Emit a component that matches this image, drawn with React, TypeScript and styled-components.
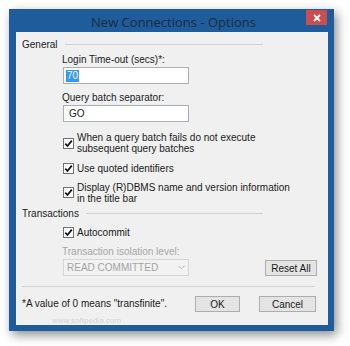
import React from "react";
import styled, { createGlobalStyle } from "styled-components";

const GlobalStyle = createGlobalStyle`
  html, body {
    margin: 0;
    padding: 0;
    background: #ffffff;
  }
  body {
    font-family: "Liberation Sans", Arial, sans-serif;
    font-size: 10px;
    color: #1a1a1a;
  }
`;

const Page = styled.div`
  width: 350px;
  height: 346px;
  padding: 9px 0 0 9px;
  box-sizing: border-box;
`;

const Window = styled.div`
  width: 325px;
  height: 322px;
  background: #1f5c9c;
  display: flex;
  flex-direction: column;
  box-shadow: 3px 4px 10px rgba(0, 0, 0, 0.45);
`;

const TitleBar = styled.div`
  height: 23px;
  position: relative;
  display: flex;
  align-items: center;
  justify-content: center;
`;

const Title = styled.div`
  font-family: "Open Sans", "Liberation Sans", sans-serif;
  font-size: 13px;
  color: #1d2b3c;
  margin-top: 2px;
  margin-left: 4px;
`;

const CloseButton = styled.div`
  position: absolute;
  top: 1px;
  right: 7px;
  width: 21px;
  height: 15px;
  background: #c74f4f;
  display: flex;
  align-items: center;
  justify-content: center;
`;

const Client = styled.div`
  flex: 1;
  margin: 0 6px 6px 7px;
  background: #f0f0f0;
  display: flex;
  flex-direction: column;
  padding: 6px 0 0 6px;
  box-sizing: border-box;
  position: relative;
`;

const GroupHeader = styled.div<{ $top?: number }>`
  width: 241px;
  height: 13px;
  display: flex;
  align-items: center;
  margin-top: ${(p) => p.$top ?? 0}px;
`;

const GroupTitle = styled.div`
  line-height: 13px;
`;

const GroupRule = styled.div`
  flex: 1;
  height: 1px;
  background: #d0d0d0;
  margin-left: 7px;
`;

const Section = styled.div`
  padding-left: 40px;
  display: flex;
  flex-direction: column;
`;

const FieldLabel = styled.div<{ $top: number; $disabled?: boolean }>`
  line-height: 12px;
  margin-top: ${(p) => p.$top}px;
  margin-bottom: 1px;
  color: ${(p) => (p.$disabled ? "#a6a6a6" : "#1a1a1a")};
`;

const TextBox = styled.div`
  width: 126px;
  height: 17px;
  box-sizing: border-box;
  border: 1px solid #a9b0bb;
  background: #ffffff;
  display: flex;
  align-items: center;
  padding-left: 2px;
  margin-left: 1px;
`;

const Selected = styled.span`
  background: #3399ff;
  color: #ffffff;
  line-height: 12px;
  padding: 0 1px;
`;

const BoxText = styled.span`
  padding-left: 3px;
`;

const CheckRow = styled.div<{ $top: number }>`
  display: flex;
  align-items: flex-start;
  margin-top: ${(p) => p.$top}px;
`;

const Box = styled.div<{ $offset?: number }>`
  width: 11px;
  height: 11px;
  box-sizing: border-box;
  border: 1px solid #707070;
  background: #ffffff;
  margin: ${(p) => p.$offset ?? 0}px 3px 0 1px;
  flex-shrink: 0;
  display: flex;
  align-items: center;
  justify-content: center;
`;

const CheckText = styled.div`
  line-height: 11px;
`;

const ControlRow = styled.div`
  display: flex;
  align-items: flex-start;
  width: 255px;
`;

const SelectBox = styled.div`
  width: 126px;
  height: 17px;
  box-sizing: border-box;
  border: 1px solid #d6d6d6;
  background: #f2f2f2;
  color: #a3a3a3;
  display: flex;
  align-items: center;
  justify-content: space-between;
  padding: 0 3px 0 3px;
  margin-left: 1px;
`;

const Spacer = styled.div`
  flex: 1;
`;

const Button = styled.div<{ $width: number }>`
  width: ${(p) => p.$width}px;
  height: 16px;
  box-sizing: border-box;
  border: 1px solid #adadad;
  background: #e4e4e4;
  display: flex;
  align-items: center;
  justify-content: center;
  color: #1a1a1a;
  margin-top: 1px;
`;

const Separator = styled.div`
  width: 293px;
  height: 1px;
  background: #d3d3d3;
  margin-top: 10px;
`;

const Footer = styled.div`
  display: flex;
  align-items: center;
  margin-top: 8px;
  width: 294px;
`;

const Footnote = styled.div`
  flex: 1;
`;

const ButtonGroup = styled.div`
  display: flex;
  gap: 19px;
`;

const Watermark = styled.div`
  position: absolute;
  left: 36px;
  bottom: 0px;
  font-size: 8px;
  color: #d2d2d2;
`;

const Check = () => (
  <svg width="9" height="9" viewBox="0 0 9 9">
    <path d="M1.3 4.6 L3.5 7 L7.8 1.6" fill="none" stroke="#111" strokeWidth="1.7" />
  </svg>
);

const App: React.FC = () => (
  <>
    <GlobalStyle />
    <Page>
      <Window>
        <TitleBar>
          <Title>New Connections - Options</Title>
          <CloseButton>
            <svg width="8" height="8" viewBox="0 0 8 8">
              <path d="M1 1 L7 7 M7 1 L1 7" stroke="#fff" strokeWidth="1.8" />
            </svg>
          </CloseButton>
        </TitleBar>
        <Client>
          <GroupHeader>
            <GroupTitle>General</GroupTitle>
            <GroupRule />
          </GroupHeader>
          <Section>
            <FieldLabel $top={3}>Login Time-out (secs)*:</FieldLabel>
            <TextBox>
              <Selected>70</Selected>
            </TextBox>
            <FieldLabel $top={8}>Query batch separator:</FieldLabel>
            <TextBox>
              <BoxText>GO</BoxText>
            </TextBox>
            <CheckRow $top={10}>
              <Box $offset={6}>
                <Check />
              </Box>
              <CheckText>
                When a query batch fails do not execute
                <br />
                subsequent query batches
              </CheckText>
            </CheckRow>
            <CheckRow $top={9}>
              <Box>
                <Check />
              </Box>
              <CheckText>Use quoted identifiers</CheckText>
            </CheckRow>
            <CheckRow $top={8}>
              <Box $offset={5}>
                <Check />
              </Box>
              <CheckText>
                Display (R)DBMS name and version information
                <br />
                in the title bar
              </CheckText>
            </CheckRow>
          </Section>
          <GroupHeader $top={3}>
            <GroupTitle>Transactions</GroupTitle>
            <GroupRule />
          </GroupHeader>
          <Section>
            <CheckRow $top={7}>
              <Box>
                <Check />
              </Box>
              <CheckText>Autocommit</CheckText>
            </CheckRow>
            <FieldLabel $top={8} $disabled>
              Transaction isolation level:
            </FieldLabel>
            <ControlRow>
              <SelectBox>
                <span>READ COMMITTED</span>
                <svg width="7" height="5" viewBox="0 0 7 5">
                  <path d="M0.5 0.8 L3.5 3.8 L6.5 0.8" fill="none" stroke="#b5b5b5" strokeWidth="1" />
                </svg>
              </SelectBox>
              <Spacer />
              <Button $width={52}>Reset All</Button>
            </ControlRow>
          </Section>
          <Separator />
          <Footer>
            <Footnote>*A value of 0 means "transfinite".</Footnote>
            <ButtonGroup>
              <Button $width={45}>OK</Button>
              <Button $width={57}>Cancel</Button>
            </ButtonGroup>
          </Footer>
          <Watermark>www.softpedia.com</Watermark>
        </Client>
      </Window>
    </Page>
  </>
);

export default App;
